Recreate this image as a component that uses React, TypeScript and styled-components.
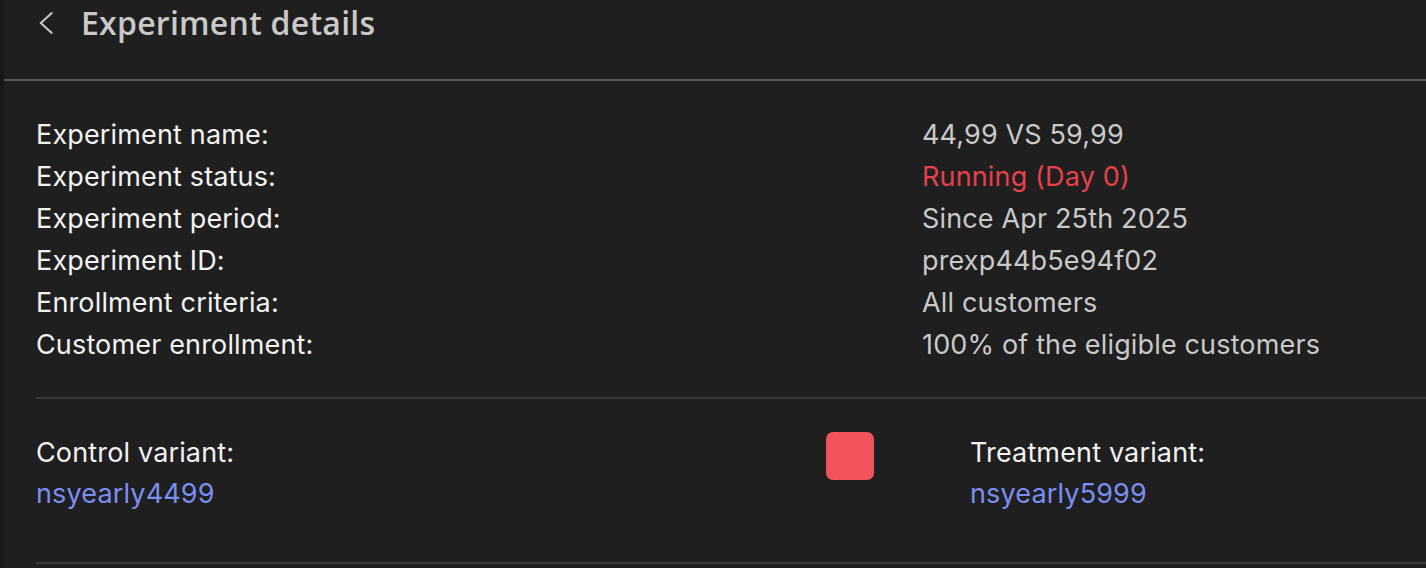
import React from "react";
import styled, { createGlobalStyle } from "styled-components";

const Global = createGlobalStyle`
  html, body { margin: 0; padding: 0; background: #1f1f1f; }
  body { font-family: Inter, "Noto Sans", sans-serif; }
`;

const Shell = styled.div`
  display: flex;
  width: 1426px;
  height: 568px;
  overflow: hidden;
  background: #1f1f1f;
`;

const EdgeStrip = styled.div`
  width: 4px;
  flex: none;
  background: #171717;
`;

const Main = styled.div`
  flex: 1;
  display: flex;
  flex-direction: column;
  min-width: 0;
`;

const Header = styled.header`
  height: 81px;
  box-sizing: border-box;
  display: flex;
  align-items: flex-start;
  padding: 6px 0 0 30px;
  border-bottom: 2px solid #555555;
`;

const BackButton = styled.button`
  width: 24px;
  height: 34px;
  display: flex;
  align-items: center;
  justify-content: center;
  background: none;
  border: none;
  padding: 0;
  margin-right: 23px;
  color: #c8c8c8;
  cursor: pointer;
`;

const Title = styled.h1`
  margin: 0;
  font-family: "Open Sans", sans-serif;
  font-size: 32px;
  font-weight: 600;
  line-height: 34px;
  color: #c9c9c9;
  letter-spacing: 0.25px;
`;

const Content = styled.div`
  padding: 0 0 0 32px;
`;

const InfoSection = styled.section`
  display: grid;
  grid-template-columns: 886px 1fr;
  padding: 33px 0 31px;
  border-bottom: 2px solid #3a3a3a;
`;

const Label = styled.div`
  font-size: 27px;
  line-height: 42px;
  letter-spacing: 0.15px;
  color: #f2f2f2;
  white-space: nowrap;
`;

const Value = styled.div<{ $tone?: "danger" }>`
  font-size: 27px;
  line-height: 42px;
  letter-spacing: 0.15px;
  color: ${(p) => (p.$tone === "danger" ? "#e5414b" : "#c9c9c9")};
  white-space: nowrap;
`;

const VariantSection = styled.section`
  display: flex;
  align-items: flex-start;
  padding: 33px 0 48px;
  border-bottom: 2px solid #3a3a3a;
`;

const Variant = styled.div<{ $width: number }>`
  width: ${(p) => p.$width}px;
  flex: none;
  display: flex;
  flex-direction: column;
`;

const VariantLabel = styled.div`
  font-size: 27px;
  line-height: 41px;
  letter-spacing: 0.15px;
  color: #f2f2f2;
`;

const VariantLink = styled.a`
  font-size: 27px;
  line-height: 41px;
  letter-spacing: 0.15px;
  color: #7b8ef2;
  text-decoration: none;
`;

const SwatchCell = styled.div`
  width: 144px;
  flex: none;
`;

const Swatch = styled.div<{ $color: string }>`
  width: 48px;
  height: 48px;
  border-radius: 7px;
  background: ${(p) => p.$color};
`;

const rows: { label: string; value: string; tone?: "danger" }[] = [
  { label: "Experiment name:", value: "44,99 VS 59,99" },
  { label: "Experiment status:", value: "Running (Day 0)", tone: "danger" },
  { label: "Experiment period:", value: "Since Apr 25th 2025" },
  { label: "Experiment ID:", value: "prexp44b5e94f02" },
  { label: "Enrollment criteria:", value: "All customers" },
  { label: "Customer enrollment:", value: "100% of the eligible customers" },
];

export default function App() {
  return (
    <>
      <Global />
      <Shell>
        <EdgeStrip />
        <Main>
          <Header>
            <BackButton aria-label="Back">
              <svg width="14" height="22" viewBox="0 0 14 22" fill="none">
                <path d="M12.5 1.2 L1.8 11 L12.5 20.8" stroke="currentColor" strokeWidth="2.1" strokeLinecap="round" strokeLinejoin="round" />
              </svg>
            </BackButton>
            <Title>Experiment details</Title>
          </Header>
          <Content>
            <InfoSection>
              {rows.map((r) => (
                <React.Fragment key={r.label}>
                  <Label>{r.label}</Label>
                  <Value $tone={r.tone}>{r.value}</Value>
                </React.Fragment>
              ))}
            </InfoSection>
            <VariantSection>
              <Variant $width={790}>
                <VariantLabel>Control variant:</VariantLabel>
                <VariantLink href="#">nsyearly4499</VariantLink>
              </Variant>
              <SwatchCell>
                <Swatch $color="#f2545b" />
              </SwatchCell>
              <Variant $width={400}>
                <VariantLabel>Treatment variant:</VariantLabel>
                <VariantLink href="#">nsyearly5999</VariantLink>
              </Variant>
            </VariantSection>
          </Content>
        </Main>
      </Shell>
    </>
  );
}
